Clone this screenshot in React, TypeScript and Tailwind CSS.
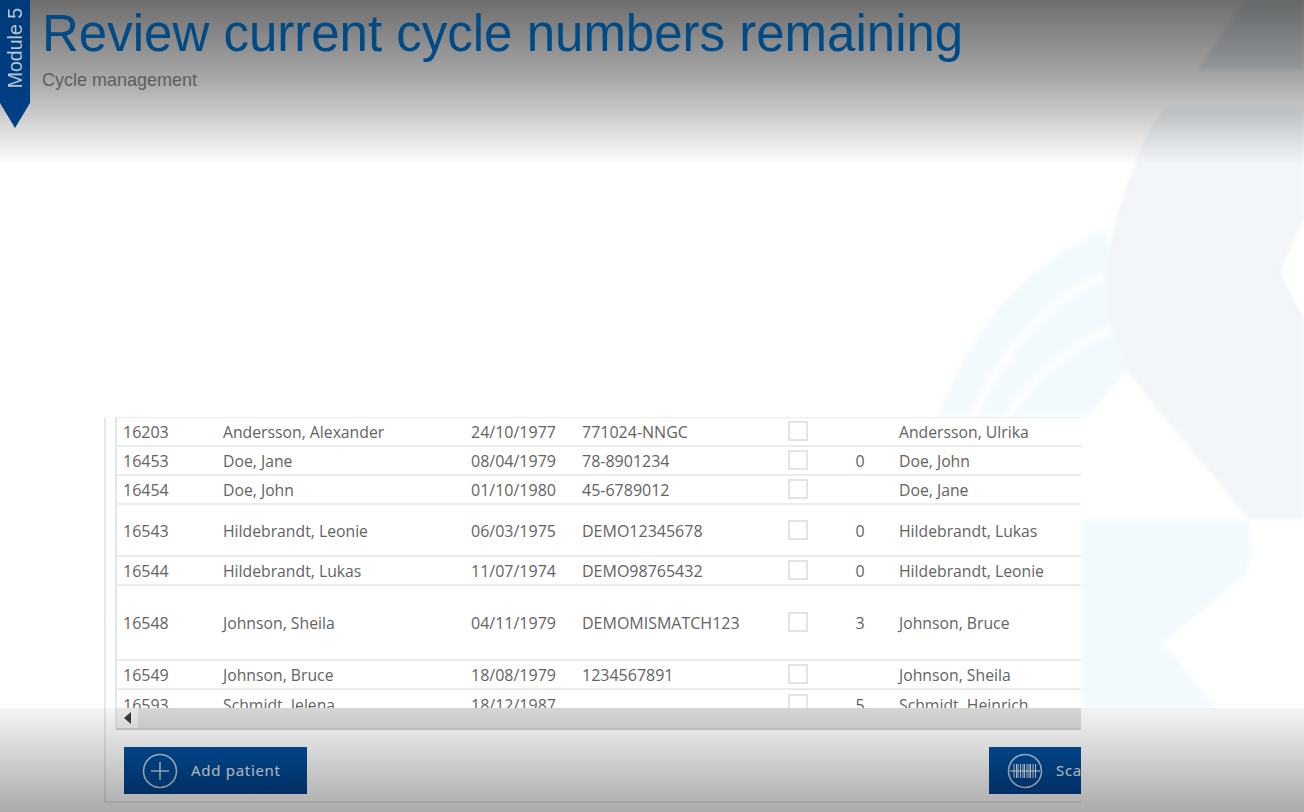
const rows = [
  { id: "16203", name: "Andersson, Alexander", dob: "24/10/1977", ref: "771024-NNGC", count: "", partner: "Andersson, Ulrika", h: "h-[29px]" },
  { id: "16453", name: "Doe, Jane", dob: "08/04/1979", ref: "78-8901234", count: "0", partner: "Doe, John", h: "h-[29px]" },
  { id: "16454", name: "Doe, John", dob: "01/10/1980", ref: "45-6789012", count: "", partner: "Doe, Jane", h: "h-[29px] pt-[1px]" },
  { id: "16543", name: "Hildebrandt, Leonie", dob: "06/03/1975", ref: "DEMO12345678", count: "0", partner: "Hildebrandt, Lukas", h: "h-[52px] pt-[1px]" },
  { id: "16544", name: "Hildebrandt, Lukas", dob: "11/07/1974", ref: "DEMO98765432", count: "0", partner: "Hildebrandt, Leonie", h: "h-[29px]" },
  { id: "16548", name: "Johnson, Sheila", dob: "04/11/1979", ref: "DEMOMISMATCH123", count: "3", partner: "Johnson, Bruce", h: "h-[75px]" },
  { id: "16549", name: "Johnson, Bruce", dob: "18/08/1979", ref: "1234567891", count: "", partner: "Johnson, Sheila", h: "h-[29px]" },
  { id: "16593", name: "Schmidt, Jelena", dob: "18/12/1987", ref: "", count: "5", partner: "Schmidt, Heinrich", h: "h-[31px]" },
]

function Watermark() {
  return (
    <svg className="absolute left-0 top-0 h-[812px] w-[1304px] blur-[2px]" viewBox="0 0 1304 812" fill="none">
      <path d="M1245 0H1304V70H1197Z" fill="#e8eef2" />
      <path d="M937 417C975 320 1030 262 1107 227L1127 370L1087 417Z" fill="#f3fafd" />
      <path d="M973 417C1005 345 1050 300 1103 276" stroke="#fbfdfe" strokeWidth="9" />
      <path d="M1007 417C1035 375 1070 347 1110 329" stroke="#fbfdfe" strokeWidth="9" />
      <path
        d="M1163 107H1310V205L1280 272L1310 330V519H1248C1210 470 1160 415 1127 370L1107 313L1105 272L1117 215L1140 149Z"
        fill="#f2f6f9"
      />
      <path d="M1081 519H1248L1252 549L1247 574L1163 643L1217 708H1081Z" fill="#f3fafd" />
    </svg>
  )
}

function CircleIcon({ children }: { children: React.ReactNode }) {
  return (
    <svg className="h-[36px] w-[36px] shrink-0" viewBox="0 0 36 36" fill="none" stroke="#b9cbdd">
      <circle cx="18" cy="18" r="16.5" strokeWidth="1.6" />
      {children}
    </svg>
  )
}

function Row({ row }: { row: (typeof rows)[number] }) {
  return (
    <div className={`${row.h} grid shrink-0 grid-cols-[106px_248px_111px_206px_45px_54px_1fr] items-center border-b-2 border-[#e9ecec] leading-[24px]`}>
      <span className="pl-[6px]">{row.id}</span>
      <span className="text-[15.75px]">{row.name}</span>
      <span>{row.dob}</span>
      <span>{row.ref}</span>
      <span className="h-[20px] w-[20px] -translate-y-px border-2 border-[#e2e4e4]" />
      <span className="text-center">{row.count}</span>
      <span className="pl-[12px] text-[15.75px]">{row.partner}</span>
    </div>
  )
}

export default function App() {
  return (
    <div className="relative flex h-[812px] w-[1304px] flex-col overflow-hidden bg-white font-['Liberation_Sans',sans-serif]">
      <Watermark />

      <header className="relative flex h-[165px] shrink-0 gap-3 bg-gradient-to-b from-black/57 via-black/33 to-black/0">
        <div className="flex h-[128px] w-[30px] shrink-0 items-start justify-center bg-gradient-to-b from-[#003a78] to-[#003f86] pt-[8px] [clip-path:polygon(0_0,100%_0,100%_103px,50%_100%,0_103px)]">
          <span className="rotate-180 text-[19.5px] leading-[30px] text-[#b9c7d6] [writing-mode:vertical-rl]">Module 5</span>
        </div>
        <div>
          <h1 className="mt-[4px] text-[51px] leading-[60px] text-[#004a86]">Review current cycle numbers remaining</h1>
          <p className="mt-[4px] text-[18px] leading-[24px] text-[#5e5e5e]">Cycle management</p>
        </div>
      </header>

      <main className="relative ml-[104px] mt-[252px] flex h-[386px] w-[977px] flex-col overflow-hidden border-b-2 border-l-2 border-[#e4eaea] bg-white font-['Open_Sans',sans-serif] text-[16px] text-[#636363]">
        <div className="ml-[9px] flex min-h-0 flex-col border-l-2 border-[#e2e6e6]">
          <div className="flex h-[291px] flex-col overflow-hidden border-t border-[#e6f0f0]">
            {rows.map((row) => (
              <Row key={row.id} row={row} />
            ))}
          </div>
          <div className="h-[22px] shrink-0 border-b-2 border-[#cfcfcf] bg-[#dedede]">
            <div className="flex h-full w-[21px] items-center justify-center bg-[#f0f0f0]">
              <span className="h-0 w-0 border-y-[6px] border-r-[7px] border-y-transparent border-r-[#3a3a3a]" />
            </div>
          </div>
        </div>

        <div className="ml-[18px] mt-[17px] flex shrink-0 justify-between">
          <button className="flex h-[47px] w-[183px] shrink-0 items-center gap-[13px] bg-gradient-to-b from-[#00509f] to-[#00428c] pl-[18px] font-['Noto_Sans',sans-serif] text-[15px] tracking-[0.7px] text-[#e0e8f0]">
            <CircleIcon>
              <path d="M18 9V27M9 18H27" strokeWidth="1.6" />
            </CircleIcon>
            Add patient
          </button>
          <button className="mr-[-108px] flex h-[47px] w-[200px] shrink-0 items-center gap-[13px] bg-gradient-to-b from-[#00509f] to-[#00428c] pl-[18px] font-['Noto_Sans',sans-serif] text-[15px] tracking-[0.7px] text-[#e0e8f0]">
            <CircleIcon>
              <path
                d="M7 11V25M9.5 11V25M11 11V25M13.5 11V25M16 11V25M17.5 11V25M20 11V25M22 11V25M23.5 11V25M26 11V25M28.5 11V25"
                strokeWidth="1"
                stroke="#dbe6f0"
              />
              <path d="M3 18H33" strokeWidth="1.2" stroke="#dbe6f0" />
            </CircleIcon>
            Scan
          </button>
        </div>
      </main>

      <div className="pointer-events-none absolute bottom-0 left-0 h-[104px] w-full bg-gradient-to-b from-black/4 to-black/33" />
    </div>
  )
}
